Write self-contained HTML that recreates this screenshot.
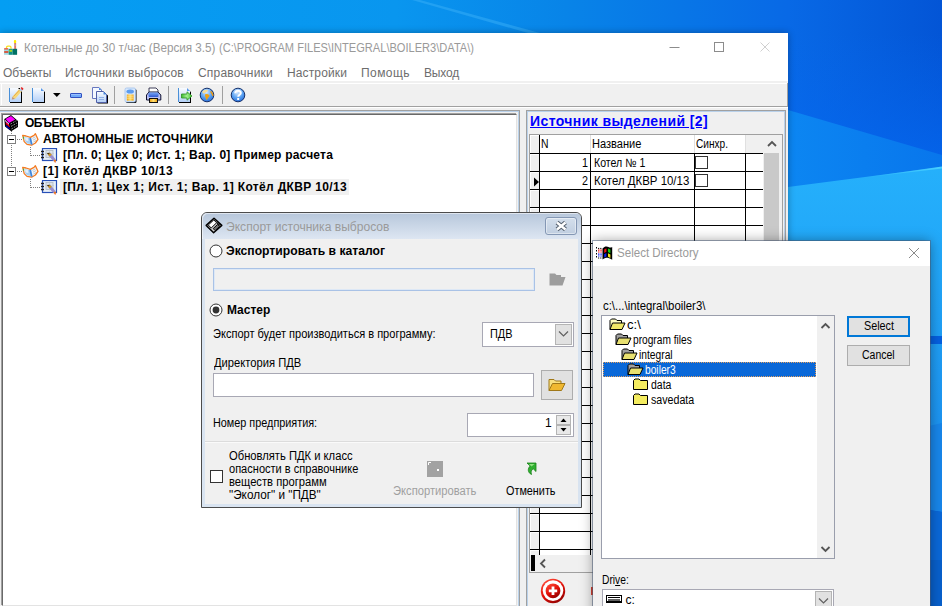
<!DOCTYPE html>
<html>
<head>
<meta charset="utf-8">
<title>Export</title>
<style>
html,body{margin:0;padding:0;}
body{width:942px;height:606px;overflow:hidden;position:relative;background:#0a7fe0;font-family:"Liberation Sans",sans-serif;font-size:11px;color:#000;}
.abs{position:absolute;}
.t{position:absolute;white-space:nowrap;line-height:1;}
/* desktop */
#desk{position:absolute;left:0;top:0;width:942px;height:606px;}
/* main window */
#main{position:absolute;left:0;top:33px;width:788px;height:573px;background:#f0f0f0;box-shadow:0 0 7px rgba(0,0,0,.32);}
#mtitle{position:absolute;left:0;top:0;width:788px;height:29px;background:#fff;}
#mmenu{position:absolute;left:0;top:29px;width:788px;height:19px;background:#fff;}
#mtool{position:absolute;left:0;top:48px;width:788px;height:26px;background:#f0f0f0;}

.mi{position:absolute;top:4px;font-size:12px;color:#6d6d6d;white-space:nowrap;line-height:14px;}
.tsep{position:absolute;top:5px;width:1px;height:18px;background:#a0a0a0;}
#lp{position:absolute;left:-1px;top:77px;width:519px;height:520px;border:1px solid #a0a0a0;box-shadow:inset 0 0 0 1px #b9d1ea;background:#f0f0f0;}
#tree{position:absolute;left:2px;top:3px;width:513px;height:490px;border-top:1px solid #696969;border-left:1px solid #696969;box-shadow:-1px -1px 0 0 #a0a0a0;background:#fff;border-right:1px solid #e3e3e3;border-bottom:1px solid #e3e3e3;}
#rp{position:absolute;left:526px;top:77px;width:258px;height:520px;border:1px solid #a0a0a0;box-shadow:inset 0 0 0 1px #b9d1ea;background:#f0f0f0;}


#grid{position:absolute;left:2px;top:23px;width:252px;height:437px;border:1px solid #a0a0a0;background:#f0f0f0;overflow:hidden;}
.gt{font-size:12px;line-height:12px;color:#000;}
.cb{width:11px;height:11px;border:1px solid #333;background:#fff;}

.tt{font-size:12px;font-weight:bold;line-height:12px;color:#000;}


#m1{letter-spacing:-0.2px;}#m2{letter-spacing:0.18px;}#m3{letter-spacing:0.2px;}#m4{letter-spacing:0.13px;}#m5{letter-spacing:0.43px;}#m6{letter-spacing:-0.18px;}
#rpt{letter-spacing:0.4px;}
#tr0{letter-spacing:-0.5px;}#tr1{letter-spacing:0.1px;}#tr2{letter-spacing:0.213px;}#tr3{letter-spacing:0.41px;}#tr4{letter-spacing:0.334px;}


#exp{position:absolute;left:201px;top:212px;width:379px;height:294px;border:1px solid #4c4c4c;border-radius:6px 6px 0 0;background:#d9e4f1;overflow:hidden;box-shadow:0 0 0 0 #000;}
#exptb{position:absolute;left:1px;top:1px;width:379px;height:26px;background:linear-gradient(#b7c7db,#dde6f2);box-shadow:inset 1px 1px 0 rgba(255,255,255,.55);border-radius:5px 5px 0 0;}
#expc{position:absolute;left:4px;top:27px;width:373px;height:265px;background:#f0f0f0;}
.db{font-size:12px;font-weight:bold;line-height:13px;}
.dt{font-size:12px;line-height:12px;}

#sd{position:absolute;left:593px;top:241px;width:337px;height:380px;background:#f0f0f0;box-shadow:0 0 12px rgba(0,0,0,.38),0 0 0 1px rgba(90,110,140,.55);}
#sdl{position:absolute;left:8px;top:74px;width:232px;height:242px;border:1px solid #9a9eac;background:#fff;}
.st{font-size:12px;line-height:12px;color:#000;}
</style>
</head>
<body>
<svg id="desk" width="942" height="606" viewBox="0 0 942 606">
  <defs>
    <linearGradient id="gtop" x1="0" y1="0" x2="1" y2="0">
      <stop offset="0" stop-color="#049ef3"/>
      <stop offset="0.42" stop-color="#0996ef"/>
      <stop offset="0.6" stop-color="#0884e8"/>
      <stop offset="0.836" stop-color="#0869e6"/>
      <stop offset="1" stop-color="#0355d6"/>
    </linearGradient>
    <linearGradient id="gA" x1="0" y1="0" x2="1" y2="0">
      <stop offset="0" stop-color="#0869e6"/>
      <stop offset="1" stop-color="#0355d6"/>
    </linearGradient>
    <linearGradient id="gA2" x1="0" y1="0" x2="0" y2="1">
      <stop offset="0" stop-color="#0566ee" stop-opacity="0"/>
      <stop offset="1" stop-color="#0568f0" stop-opacity="0.75"/>
    </linearGradient>
    <linearGradient id="gB" x1="0" y1="0" x2="1" y2="0">
      <stop offset="0" stop-color="#0c86f2"/>
      <stop offset="1" stop-color="#0876ec"/>
    </linearGradient>
    <linearGradient id="gC" x1="0" y1="0" x2="0" y2="1">
      <stop offset="0" stop-color="#25b0fb"/>
      <stop offset="0.3" stop-color="#22a8f9"/>
      <stop offset="1" stop-color="#1c92f0"/>
    </linearGradient>
    <linearGradient id="gL" x1="0" y1="0" x2="1" y2="0">
      <stop offset="0" stop-color="#48d0ff" stop-opacity="0"/>
      <stop offset="1" stop-color="#48d0ff" stop-opacity="1"/>
    </linearGradient>
  </defs>
  <rect x="0" y="0" width="942" height="606" fill="url(#gtop)"/>
  <polygon points="412,0 420,0 540,33 528,33" fill="#3ab0f8" opacity="0.5"/>
  <rect x="788" y="0" width="154" height="163" fill="url(#gA)"/>
  <rect x="788" y="33" width="154" height="130" fill="url(#gA2)"/>
  <polygon points="788,110 942,155 942,170 788,190" fill="url(#gB)"/>
  <polygon points="788,187 942,167 942,440 788,440" fill="url(#gC)"/>
  <polygon points="860,178 942,166.5 942,168.5" fill="url(#gL)"/>
  <rect x="929" y="336" width="13" height="8" fill="#0560e0"/>
  <polygon points="929,426 942,423 942,512 929,510" fill="#1886ea"/>
  <polygon points="929,510 942,512 942,606 929,606" fill="#0a68d8"/>
  <polygon points="929,560 942,560 942,606 929,606" fill="#0860cc"/>
</svg>

<div id="main">
  <div id="mtitle">
    <svg class="abs" style="left:3px;top:6px" width="16" height="17" viewBox="3 39 16 17">
<rect x="13.9" y="40" width="2.3" height="3.2" rx="1" fill="#ffee00"/>
<rect x="14.2" y="43" width="1.9" height="6" fill="#e07868"/>
<rect x="14.2" y="44.6" width="1.9" height="1" fill="#b0b8c0"/>
<path d="M6.5 48.5V47.2C6.5 46.4 7 46.2 8 46.2H9.5C10.5 46.2 11 46.6 11 47.6V48.8" stroke="#f8e020" stroke-width="1.3" fill="none"/>
<rect x="4" y="48.8" width="4.7" height="6" fill="#a8d8e2"/>
<rect x="4.2" y="48.2" width="4" height="1.3" fill="#e85030"/>
<rect x="4.2" y="51.2" width="4.2" height="1.6" fill="#e04020"/>
<rect x="8.7" y="48.8" width="3.9" height="6" fill="#109088"/>
<rect x="9.3" y="49.8" width="2.8" height="2" fill="#a8d820"/>
<rect x="12.6" y="48.8" width="4.5" height="6" fill="#007064"/>
</svg>
    <span class="t" id="ttl" style="transform:scaleX(0.9725);transform-origin:0 0;left:24px;top:8px;font-size:12px;color:#9a9a9a;line-height:14px;">Котельные до 30 т/час (Версия 3.5)</span><span class="t" id="ttl2" style="transform:scaleX(0.9230);transform-origin:0 0;left:218.5px;top:8px;font-size:12px;color:#9a9a9a;line-height:14px;">(C:\PROGRAM FILES\INTEGRAL\BOILER3\DATA\)</span>
    <svg class="abs" style="left:660px;top:0" width="128" height="29" viewBox="0 0 128 29">
      <path d="M9.5 14.5H19.5" stroke="#8c8c8c" stroke-width="1" fill="none"/>
      <rect x="54.5" y="9.5" width="9" height="9" stroke="#8c8c8c" stroke-width="1" fill="none"/>
      <path d="M100.5 9.5L109.5 18.5M109.5 9.5L100.5 18.5" stroke="#d0d0d0" stroke-width="1" fill="none"/>
    </svg>
  </div>
  <div id="mmenu">
    <span class="mi" id="m1" style="left:3px">Объекты</span>
    <span class="mi" id="m2" style="left:65px">Источники выбросов</span>
    <span class="mi" id="m3" style="left:198px">Справочники</span>
    <span class="mi" id="m4" style="left:287px">Настройки</span>
    <span class="mi" id="m5" style="left:361px">Помощь</span>
    <span class="mi" id="m6" style="left:424px">Выход</span>
  </div>
  <div id="mtool">
    <div class="abs" style="left:0;top:2px;width:787px;height:1px;background:#fff"></div>
    <div class="abs" style="left:1px;top:3px;width:1px;height:21px;background:#fff"></div>
    <div class="abs" style="left:787px;top:2px;width:1px;height:23px;background:#a0a0a0"></div>
    <div class="tsep" style="left:114px"></div>
    <div class="tsep" style="left:168px"></div>
    <div class="tsep" style="left:222px"></div>
    
<svg class="abs" style="left:0;top:2px" width="260" height="24" viewBox="0 83 260 24">
<defs>
<linearGradient id="pg" x1="0" y1="0" x2="0" y2="1"><stop offset="0" stop-color="#fafcff"/><stop offset="1" stop-color="#b4d0f8"/></linearGradient>
<linearGradient id="pb" x1="0" y1="0" x2="0" y2="1"><stop offset="0" stop-color="#78a8f8"/><stop offset="1" stop-color="#3058d0"/></linearGradient>
<radialGradient id="gl" cx="0.4" cy="0.35" r="0.7"><stop offset="0" stop-color="#a8d0ff"/><stop offset="0.6" stop-color="#3a80f0"/><stop offset="1" stop-color="#1048c0"/></radialGradient>
<radialGradient id="gl2" cx="0.45" cy="0.3" r="0.75"><stop offset="0" stop-color="#d8eaff"/><stop offset="0.55" stop-color="#5aa2f2"/><stop offset="1" stop-color="#2466d6"/></radialGradient>
<linearGradient id="yl" x1="0" y1="0" x2="1" y2="0"><stop offset="0" stop-color="#f0a010"/><stop offset="0.5" stop-color="#ffe070"/><stop offset="1" stop-color="#f0a010"/></linearGradient>
<linearGradient id="gr" x1="0" y1="0" x2="1" y2="0"><stop offset="0" stop-color="#40b830"/><stop offset="0.5" stop-color="#a0f090"/><stop offset="1" stop-color="#48c838"/></linearGradient>
</defs>
<!-- 1 edit -->
<rect x="10" y="89" width="12" height="14" fill="#000"/>
<rect x="9" y="88" width="12" height="14" fill="url(#pg)"/>
<rect x="9" y="88" width="1" height="14" fill="#4a90d8"/>
<path d="M12.4 96.8L19.6 88.6L22.2 90.8L15 99Z" fill="#f8d878"/>
<path d="M12.4 96.8L15 99L11.8 99.6Z" fill="#c89870"/>
<path d="M13.5 96.5L20.5 89" stroke="#e0a040" stroke-width="0.8"/>
<path d="M19 89.8L20.6 88.2L22.6 90L21 91.8Z" fill="#b8c8e8"/>
<path d="M20.6 88L21.8 87L23.5 88.8L22.6 90.2Z" fill="#e82020"/>
<path d="M18.5 88.5H20" stroke="#000" stroke-width="1"/>
<!-- 2 new -->
<path d="M33 89H41L45 92V103H33Z" fill="#000"/>
<path d="M32 88H41L44 91V102H32Z" fill="url(#pg)"/>
<rect x="32" y="88" width="1" height="14" fill="#4a90d8"/>
<path d="M41 88V91H44Z" fill="#5898e8"/>
<!-- arrow -->
<path d="M53 93H60.6L56.8 97Z" fill="#000"/>
<!-- minus -->
<rect x="70.5" y="93.5" width="11" height="4" rx="0.5" fill="#70a8f8" stroke="#3050c0" stroke-width="1"/>
<rect x="71" y="94" width="10" height="1" fill="#98c0ff"/>
<!-- copy -->
<path d="M92.5 87.5H99L101.5 90V98.5H92.5Z" fill="#f4f8ff" stroke="#6878c0" stroke-width="1"/>
<path d="M99 87.5V90H101.5Z" fill="#4888e0"/>
<path d="M97.5 92.5H104L108 95.5V103.5H97.5Z" fill="#000"/>
<path d="M96.5 91.5H103.5L106.5 94.5V102.5H96.5Z" fill="url(#pg)" stroke="#5060a8" stroke-width="1"/>
<path d="M103.5 91.5V94.5H106.5Z" fill="#4888e0"/>
<path d="M99 97.5H104M99 99.5H104" stroke="#90b0e8" stroke-width="1"/>
<!-- db -->
<rect x="126" y="89" width="10.5" height="14" rx="1.5" fill="#000"/>
<rect x="125" y="88" width="10.5" height="14" rx="1.5" fill="#d8e8fc" stroke="#a0c0ec" stroke-width="0.8"/>
<ellipse cx="130.2" cy="91.5" rx="3.8" ry="2" fill="#5c9cf0"/>
<rect x="126.8" y="94.5" width="6.8" height="6.2" fill="url(#yl)"/>
<path d="M126.8 96.2H133.6M126.8 98.2H133.6" stroke="#fff0b0" stroke-width="0.6"/>
<!-- printer -->
<path d="M149 92V88H156L158 90V92" fill="#fff" stroke="#101030" stroke-width="0.8"/>
<path d="M146.5 95L149 92H158L160.8 95V100H146.5Z" fill="#b8c0f4" stroke="#101030" stroke-width="1"/>
<rect x="148.5" y="92.5" width="10" height="4.5" rx="1" fill="url(#pb)"/>
<rect x="149.5" y="98.5" width="8" height="4" fill="url(#yl)" stroke="#101010" stroke-width="1"/>
<!-- export -->
<path d="M179 89H187L191 92V103H179Z" fill="#000"/>
<path d="M178 88H187L190 91V102H178Z" fill="url(#pg)"/>
<rect x="178" y="88" width="1" height="14" fill="#4a90d8"/>
<path d="M187 88V91H190Z" fill="#5898e8"/>
<path d="M181.5 94H187V91.8L192 96L187 100.2V98H181.5Z" fill="url(#gr)" stroke="#2a9020" stroke-width="0.8"/>
<!-- globe -->
<circle cx="207" cy="95" r="6.8" fill="url(#gl2)" stroke="#15306a" stroke-width="1"/>
<path d="M202.2 92C203 90.5 205 89.6 207.5 89.8C208.5 90.6 207.5 91.6 206.5 92C205.5 92.6 204.5 93.6 203 93.4Z" fill="#f6dc98"/>
<path d="M205.2 94.2C206.5 93.6 208.5 94.2 209.6 95.4C209 97 207.6 98 206.8 100.2C205.6 99 205.8 97 205 96Z" fill="#f0a010"/>
<path d="M210.6 90.8C212.4 91.6 213.6 93.5 213.5 96C212.4 96.6 211.8 95.2 211.6 94C210.6 93.4 210 92 210.6 90.8Z" fill="#e89a18"/>
<!-- help -->
<circle cx="238" cy="95" r="6.8" fill="url(#gl2)" stroke="#15306a" stroke-width="1"/>
<path d="M235.3 93.2C235.3 90 240.8 90 240.8 93C240.8 94.8 238.2 94.8 238.2 96.8" stroke="#fff" stroke-width="2" fill="none"/>
<rect x="237.2" y="98" width="2" height="2" fill="#fff"/>
</svg>

  </div>
  <div class="abs" style="left:0;top:73px;width:788px;height:1px;background:#a0a0a0"></div>
  <div class="abs" style="left:0;top:74px;width:788px;height:1px;background:#fff"></div>
  <!-- left panel -->
  <div id="lp">
    <div id="tree">
      <div class="abs" style="left:57px;top:64px;width:289px;height:16px;background:#f0f0f0"></div>
<svg class="abs" style="left:0;top:0" width="80" height="90" viewBox="3 115 80 90" shape-rendering="crispEdges">
<g stroke="#808080" stroke-width="1" stroke-dasharray="1 1" fill="none">
<path d="M11.5 131V135"/>
<path d="M11.5 145V167"/>
<path d="M17 139.5H22"/>
<path d="M17 171.5H22"/>
<path d="M30.5 147V156"/>
<path d="M30.5 155.5H41"/>
<path d="M30.5 179V188"/>
<path d="M30.5 187.5H41"/>
</g>
<g stroke="#808080" fill="#fff">
<rect x="7.5" y="135.5" width="8" height="8"/>
<rect x="7.5" y="167.5" width="8" height="8"/>
</g>
<g stroke="#000">
<path d="M9 139.5H14"/>
<path d="M9 171.5H14"/>
</g>
</svg>
<svg class="abs" style="left:0px;top:-1px" width="17" height="18" viewBox="3 114 17 18">
<path d="M4.3 119L11 115L18 121V127L11.2 131.3L5 126.5Z" fill="#000"/>
<path d="M5.6 119.1L11 115.9L15.2 119.5L9 123Z" fill="#ff00ff"/>
<path d="M5 120.4L9 124.2" stroke="#fff" stroke-width="1"/>
<path d="M5.4 121.6L8.8 124.9" stroke="#ff40ff" stroke-width="0.8"/>
<path d="M6 123.2L9.6 126.6" stroke="#ff0000" stroke-width="1.3"/>
<path d="M6 125.6L9.8 129" stroke="#0000a8" stroke-width="1.5"/>
<path d="M10.5 124L16.5 120.6M11 126.4L17 123M11.4 129L17.2 125.6" stroke="#8c8c8c" stroke-width="1" stroke-dasharray="1.8 1"/>
</svg>
<svg class="abs" style="left:19px;top:18px" width="17" height="14" viewBox="0 0 17 14">
<path d="M0.7 2.4L4 3L8.3 4.3L12 2.4L13.4 0.7L16 6.4L13.4 10L9.6 12.2L5 11.4L2.2 8.6Z" fill="#f4f8fd" stroke="#f47a20" stroke-width="1.3" stroke-linejoin="round"/>
<path d="M2.6 4L8 5.3L9.2 11L5.2 10.4L3 8Z" fill="#a8cff2"/>
<path d="M3 4.4L6 5.2L6.4 8L3.6 7.4Z" fill="#e4f0fc"/>
<path d="M8.2 5L9.8 11.6" stroke="#3f86dc" stroke-width="1.8"/>
<path d="M10.4 5.4L13.4 3.8M10.9 7.2L13.9 5.6M11.4 9L14 7.6" stroke="#a8b0b8" stroke-width="0.7"/>
<path d="M1.6 3.6V5.8" stroke="#40b040" stroke-width="1"/>
</svg>
<svg class="abs" style="left:19px;top:50px" width="17" height="14" viewBox="0 0 17 14">
<path d="M0.7 2.4L4 3L8.3 4.3L12 2.4L13.4 0.7L16 6.4L13.4 10L9.6 12.2L5 11.4L2.2 8.6Z" fill="#f4f8fd" stroke="#f47a20" stroke-width="1.3" stroke-linejoin="round"/>
<path d="M2.6 4L8 5.3L9.2 11L5.2 10.4L3 8Z" fill="#a8cff2"/>
<path d="M3 4.4L6 5.2L6.4 8L3.6 7.4Z" fill="#e4f0fc"/>
<path d="M8.2 5L9.8 11.6" stroke="#3f86dc" stroke-width="1.8"/>
<path d="M10.4 5.4L13.4 3.8M10.9 7.2L13.9 5.6M11.4 9L14 7.6" stroke="#a8b0b8" stroke-width="0.7"/>
<path d="M1.6 3.6V5.8" stroke="#40b040" stroke-width="1"/>
</svg>
<svg class="abs" style="left:38px;top:33px" width="17" height="16" viewBox="0 0 17 16">
<rect x="1.5" y="0.5" width="14" height="12" fill="#e8f0fa" stroke="#2850b8" stroke-width="1.2"/>
<rect x="5" y="2.5" width="7" height="7" fill="#dde3ea" stroke="#b0b8c4" stroke-width="0.8"/>
<path d="M8.5 1.5V10.5M4 5.5H13" stroke="#c0c8d0" stroke-width="0.6"/>
<path d="M0 3.5H3M0 6.5H3M0 9.5H3" stroke="#202020" stroke-width="1.4"/>
<path d="M6.6 6.4L9.2 4.8L14.6 11.2L12.4 13.2Z" fill="#9a8ed0"/>
<path d="M5.8 5L9.2 4.8L7.4 7Z" fill="#503808"/>
<path d="M7 6.6L9.4 5.2L10.8 6.8L8.6 8.4Z" fill="#d09820"/>
<path d="M12.6 12.6L14.2 11.3L15.2 13L13.8 14.4Z" fill="#f07818"/>
<path d="M13.8 14.2L14.6 13.4L14.3 15Z" fill="#e02020"/>
</svg>
<svg class="abs" style="left:38px;top:65px" width="17" height="16" viewBox="0 0 17 16">
<rect x="1.5" y="0.5" width="14" height="12" fill="#e8f0fa" stroke="#2850b8" stroke-width="1.2"/>
<rect x="5" y="2.5" width="7" height="7" fill="#dde3ea" stroke="#b0b8c4" stroke-width="0.8"/>
<path d="M8.5 1.5V10.5M4 5.5H13" stroke="#c0c8d0" stroke-width="0.6"/>
<path d="M0 3.5H3M0 6.5H3M0 9.5H3" stroke="#202020" stroke-width="1.4"/>
<path d="M6.6 6.4L9.2 4.8L14.6 11.2L12.4 13.2Z" fill="#9a8ed0"/>
<path d="M5.8 5L9.2 4.8L7.4 7Z" fill="#503808"/>
<path d="M7 6.6L9.4 5.2L10.8 6.8L8.6 8.4Z" fill="#d09820"/>
<path d="M12.6 12.6L14.2 11.3L15.2 13L13.8 14.4Z" fill="#f07818"/>
<path d="M13.8 14.2L14.6 13.4L14.3 15Z" fill="#e02020"/>
</svg>
<span class="t tt" id="tr0" style="left:22px;top:2px">ОБЪЕКТЫ</span>
<span class="t tt" id="tr1" style="left:40px;top:18px">АВТОНОМНЫЕ ИСТОЧНИКИ</span>
<span class="t tt" id="tr2" style="left:60px;top:34px">[Пл. 0; Цех 0; Ист. 1; Вар. 0] Пример расчета</span>
<span class="t tt" id="tr3" style="left:40px;top:50px">[1] Котёл ДКВР 10/13</span>
<span class="t tt" id="tr4" style="left:60px;top:66px">[Пл. 1; Цех 1; Ист. 1; Вар. 1] Котёл ДКВР 10/13</span>
    </div>
  </div>
  <div class="abs" style="left:0;top:79px;width:1px;height:500px;background:#f0f0f0"></div>
  <!-- right panel -->
  <div id="rp">
    <span class="t" id="rpt" style="left:3px;top:2px;font-size:14px;font-weight:bold;color:#0000ff;text-decoration:underline;line-height:16px;">Источник выделений [2]</span>
    <div id="grid">
<div class="abs" style="left:0;top:0;width:233px;height:420px;background:#fff"></div>
<div class="abs" style="left:0;top:0;width:9px;height:420px;background:#f0f0f0"></div>
<div class="abs" style="left:216px;top:0;width:17px;height:18px;background:#f0f0f0"></div>
<div class="abs" style="left:60px;top:0;width:1px;height:18px;background:#e0e0e0"></div>
<div class="abs" style="left:164px;top:0;width:1px;height:18px;background:#e0e0e0"></div>
<div class="abs" style="left:215px;top:0;width:1px;height:18px;background:#e0e0e0"></div>
<div class="abs" style="left:0;top:0;width:9px;height:1px;background:#fff"></div>
<div class="abs" style="left:0;top:0;width:1px;height:420px;background:#fff"></div>
<div class="abs" style="left:0;top:18px;width:233px;height:1px;background:#000"></div>
<div class="abs" style="left:1px;top:19px;width:8px;height:1px;background:#fff"></div>
<div class="abs" style="left:0;top:36px;width:233px;height:1px;background:#000"></div>
<div class="abs" style="left:1px;top:37px;width:8px;height:1px;background:#fff"></div>
<div class="abs" style="left:0;top:54px;width:233px;height:1px;background:#000"></div>
<div class="abs" style="left:1px;top:55px;width:8px;height:1px;background:#fff"></div>
<div class="abs" style="left:0;top:72px;width:233px;height:1px;background:#000"></div>
<div class="abs" style="left:1px;top:73px;width:8px;height:1px;background:#fff"></div>
<div class="abs" style="left:0;top:90px;width:233px;height:1px;background:#000"></div>
<div class="abs" style="left:1px;top:91px;width:8px;height:1px;background:#fff"></div>
<div class="abs" style="left:0;top:108px;width:233px;height:1px;background:#000"></div>
<div class="abs" style="left:1px;top:109px;width:8px;height:1px;background:#fff"></div>
<div class="abs" style="left:0;top:126px;width:233px;height:1px;background:#000"></div>
<div class="abs" style="left:1px;top:127px;width:8px;height:1px;background:#fff"></div>
<div class="abs" style="left:0;top:144px;width:233px;height:1px;background:#000"></div>
<div class="abs" style="left:1px;top:145px;width:8px;height:1px;background:#fff"></div>
<div class="abs" style="left:0;top:162px;width:233px;height:1px;background:#000"></div>
<div class="abs" style="left:1px;top:163px;width:8px;height:1px;background:#fff"></div>
<div class="abs" style="left:0;top:180px;width:233px;height:1px;background:#000"></div>
<div class="abs" style="left:1px;top:181px;width:8px;height:1px;background:#fff"></div>
<div class="abs" style="left:0;top:198px;width:233px;height:1px;background:#000"></div>
<div class="abs" style="left:1px;top:199px;width:8px;height:1px;background:#fff"></div>
<div class="abs" style="left:0;top:216px;width:233px;height:1px;background:#000"></div>
<div class="abs" style="left:1px;top:217px;width:8px;height:1px;background:#fff"></div>
<div class="abs" style="left:0;top:234px;width:233px;height:1px;background:#000"></div>
<div class="abs" style="left:1px;top:235px;width:8px;height:1px;background:#fff"></div>
<div class="abs" style="left:0;top:252px;width:233px;height:1px;background:#000"></div>
<div class="abs" style="left:1px;top:253px;width:8px;height:1px;background:#fff"></div>
<div class="abs" style="left:0;top:270px;width:233px;height:1px;background:#000"></div>
<div class="abs" style="left:1px;top:271px;width:8px;height:1px;background:#fff"></div>
<div class="abs" style="left:0;top:288px;width:233px;height:1px;background:#000"></div>
<div class="abs" style="left:1px;top:289px;width:8px;height:1px;background:#fff"></div>
<div class="abs" style="left:0;top:306px;width:233px;height:1px;background:#000"></div>
<div class="abs" style="left:1px;top:307px;width:8px;height:1px;background:#fff"></div>
<div class="abs" style="left:0;top:324px;width:233px;height:1px;background:#000"></div>
<div class="abs" style="left:1px;top:325px;width:8px;height:1px;background:#fff"></div>
<div class="abs" style="left:0;top:342px;width:233px;height:1px;background:#000"></div>
<div class="abs" style="left:1px;top:343px;width:8px;height:1px;background:#fff"></div>
<div class="abs" style="left:0;top:360px;width:233px;height:1px;background:#000"></div>
<div class="abs" style="left:1px;top:361px;width:8px;height:1px;background:#fff"></div>
<div class="abs" style="left:0;top:378px;width:233px;height:1px;background:#000"></div>
<div class="abs" style="left:1px;top:379px;width:8px;height:1px;background:#fff"></div>
<div class="abs" style="left:0;top:396px;width:233px;height:1px;background:#000"></div>
<div class="abs" style="left:1px;top:397px;width:8px;height:1px;background:#fff"></div>
<div class="abs" style="left:0;top:414px;width:233px;height:1px;background:#000"></div>
<div class="abs" style="left:1px;top:415px;width:8px;height:1px;background:#fff"></div>
<div class="abs" style="left:9px;top:0;width:1px;height:420px;background:#000"></div>
<div class="abs" style="left:60px;top:18px;width:1px;height:402px;background:#000"></div>
<div class="abs" style="left:164px;top:18px;width:1px;height:402px;background:#000"></div>
<div class="abs" style="left:215px;top:18px;width:1px;height:402px;background:#000"></div>
<span class="t gt" id="gh1" style="transform:scaleX(0.8649);transform-origin:0 0;left:11px;top:3px">N</span>
<span class="t gt" id="gh2" style="transform:scaleX(0.9212);transform-origin:0 0;left:61.700000000000045px;top:3px">Название</span>
<span class="t gt" id="gh3" style="transform:scaleX(0.8418);transform-origin:0 0;left:165.60000000000002px;top:3px">Синхр.</span>
<span class="t gt" id="gr1n" style="transform:scaleX(0.8972);transform-origin:0 0;left:52px;top:22px">1</span>
<span class="t gt" id="gr1t" style="transform:scaleX(0.8805);transform-origin:0 0;left:63.700000000000045px;top:22px">Котел № 1</span>
<span class="t gt" id="gr2n" style="transform:scaleX(0.8972);transform-origin:0 0;left:52px;top:40px">2</span>
<span class="t gt" id="gr2t" style="transform:scaleX(0.9542);transform-origin:0 0;left:63.700000000000045px;top:40px">Котел ДКВР 10/13</span>
<div class="abs cb" style="left:165px;top:21px"></div>
<div class="abs cb" style="left:165px;top:39px"></div>
<svg class="abs" style="left:4px;top:42px" width="6" height="10" viewBox="0 0 6 10"><path d="M0 0.5L5 5L0 9.5Z" fill="#000"/></svg>
<div class="abs" style="left:233px;top:0;width:19px;height:420px;background:#f0f0f0"></div>
<div class="abs" style="left:234px;top:18px;width:15px;height:402px;background:#c9c9c9"></div>
<svg class="abs" style="left:234px;top:0" width="16" height="18" viewBox="0 0 16 18"><path d="M4 11L8 7L12 11" stroke="#555" stroke-width="1.8" fill="none"/></svg>
<div class="abs" style="left:0;top:420px;width:252px;height:17px;background:#f0f0f0"></div>
<div class="abs" style="left:1px;top:420px;width:4px;height:16px;background:#000"></div>
<svg class="abs" style="left:8px;top:420px" width="10" height="17" viewBox="0 0 10 17"><path d="M7 4.5L3 8.5L7 12.5" stroke="#555" stroke-width="1.8" fill="none"/></svg>
</div>
<svg class="abs" style="left:13px;top:467px" width="26" height="26" viewBox="0 0 26 26">
<defs><linearGradient id="rb" x1="0.2" y1="0" x2="0.8" y2="1"><stop offset="0" stop-color="#ff4a38"/><stop offset="0.5" stop-color="#e01008"/><stop offset="1" stop-color="#8c0000"/></linearGradient></defs>
<circle cx="13" cy="13" r="12.2" fill="url(#rb)"/>
<circle cx="13" cy="12.6" r="10.3" fill="#fff"/>
<circle cx="13" cy="12.8" r="7.4" fill="url(#rb)"/>
<path d="M13 8.6V17M8.8 12.8H17.2" stroke="#fff" stroke-width="2.8" fill="none"/>
</svg>
<div class="abs" style="left:64px;top:476px;width:2px;height:8px;background:#d84030"></div>
  </div>
</div>
<div id="exp"><div class="abs" style="left:-1px;top:-1px;width:0;height:0">
<div id="exptb"></div>
<svg class="abs" style="left:4px;top:5px" width="19" height="17" viewBox="205 217 19 17">
<path d="M206.2 225.4L214 218.2L221.8 225.4L213.6 232.8Z" fill="#d4d4d4" stroke="#000" stroke-width="1.5" stroke-linejoin="round"/>
<path d="M208.3 225L213.8 219.9L216.6 222.8L211.2 228Z" fill="#fff" stroke="#000" stroke-width="1"/>
<path d="M213.2 228.6L217.6 224.4L219.6 226.4L215.2 230.6Z" fill="#707070" stroke="#000" stroke-width="1"/>
<path d="M216.8 222.6L219.8 225.4" stroke="#000" stroke-width="1.2"/>
</svg>
<span class="t" id="expt" style="transform:scaleX(1.0067);transform-origin:0 0;left:25px;top:8px;font-size:12px;line-height:14px;color:#9a9a9a">Экспорт источника выбросов</span>
<div class="abs" style="left:344px;top:5px;width:30px;height:16px;border:1px solid #8497b4;border-radius:3px;background:linear-gradient(#d4dfec,#c0cee0);box-shadow:inset 0 0 0 1px rgba(255,255,255,.45)"></div>
<svg class="abs" style="left:352px;top:7px" width="18" height="14" viewBox="553 219 18 14"><path d="M557 222.5L565.5 229.5M565.5 222.5L557 229.5" stroke="#55606e" stroke-width="4.4" fill="none"/><path d="M557 222.5L565.5 229.5M565.5 222.5L557 229.5" stroke="#fff" stroke-width="2.4" fill="none"/></svg>
<div id="expc">
</div>
<svg class="abs" style="left:7.5px;top:32px" width="14" height="14" viewBox="0 0 14 14"><circle cx="7" cy="7" r="6" fill="#fff" stroke="#333" stroke-width="1"/></svg>
<svg class="abs" style="left:7.5px;top:91px" width="14" height="14" viewBox="0 0 14 14"><circle cx="7" cy="7" r="6" fill="#fff" stroke="#333" stroke-width="1"/><circle cx="7" cy="7" r="3.4" fill="#333"/></svg>
<span class="t db" id="e1" style="transform:scaleX(1.0131);transform-origin:0 0;left:25px;top:33px">Экспортировать в каталог</span>
<span class="t db" id="e2" style="transform:scaleX(0.9960);transform-origin:0 0;left:26px;top:92px">Мастер</span>
<div class="abs" style="left:12px;top:56px;width:320px;height:21px;border:1px solid #a9c2e6;box-shadow:inset 0 0 0 1px #dde8f6;background:#f0f0f0"></div>
<svg class="abs" style="left:348px;top:61px" width="17" height="13" viewBox="0 0 17 13"><path d="M0.5 0.5H6L7.5 2H12V4H16.5L13.5 12.5H0.5Z" fill="#9d9d9d"/></svg>
<span class="t dt" id="e3" style="transform:scaleX(0.9199);transform-origin:0 0;left:12px;top:116px">Экспорт будет производиться в программу:</span>
<div class="abs" style="left:281px;top:110px;width:90px;height:23px;border:1px solid #a8a8b4;background:#fff"></div>
<span class="t dt" id="e4" style="transform:scaleX(0.9085);transform-origin:0 0;left:289px;top:116px;font-size:12px">ПДВ</span>
<div class="abs" style="left:354px;top:112px;width:15px;height:19px;border:1px solid #b4b4b4;background:#e1e1e1"></div>
<svg class="abs" style="left:357px;top:118px" width="11" height="8" viewBox="0 0 11 8"><path d="M1 1.5L5.5 6L10 1.5" stroke="#606060" stroke-width="1.2" fill="none"/></svg>
<span class="t dt" id="e5" style="transform:scaleX(0.9331);transform-origin:0 0;left:13px;top:145px">Директория ПДВ</span>
<div class="abs" style="left:12px;top:161px;width:319px;height:22px;border:1px solid #a8a8b4;background:#fff"></div>
<div class="abs" style="left:340px;top:158px;width:30px;height:28px;border:1px solid #adadad;background:#e1e1e1"></div>
<svg class="abs" style="left:347px;top:166px" width="18" height="14" viewBox="0 0 18 14">
<path d="M1 12.5V1.5H6L7.5 3H13V5.5" fill="#f8e080" stroke="#a07818" stroke-width="1"/>
<path d="M1 12.5L4.5 5.5H17L13.5 12.5Z" fill="#f0b830" stroke="#a07818" stroke-width="1"/>
</svg>
<span class="t dt" id="e6" style="transform:scaleX(0.9031);transform-origin:0 0;left:12px;top:205px">Номер предприятия:</span>
<div class="abs" style="left:266px;top:201px;width:105px;height:22px;border:1px solid #a8a8b4;background:#fff"></div>
<span class="t dt" id="e7" style="left:344px;top:205px;font-size:12px">1</span>
<svg class="abs" style="left:355px;top:203px" width="15" height="20" viewBox="0 0 15 20">
<rect x="0.5" y="0.5" width="14" height="9" fill="#e8e8e8" stroke="#b4b4b4"/>
<rect x="0.5" y="10.5" width="14" height="9" fill="#e8e8e8" stroke="#b4b4b4"/>
<path d="M4.5 7L7.5 3.5L10.5 7Z" fill="#000"/>
<path d="M4.5 13L7.5 16.5L10.5 13Z" fill="#000"/>
</svg>
<div class="abs" style="left:4px;top:229px;width:373px;height:1px;background:#dcdcdc"></div>
<div class="abs" style="left:4px;top:230px;width:373px;height:1px;background:#fafafa"></div>
<div class="abs" style="left:9px;top:258px;width:11px;height:11px;border:1px solid #333;background:#fff"></div>
<span class="t dt" id="c0" style="transform:scaleX(0.9337);transform-origin:0 0;left:28px;top:238px">Обновлять ПДК и класс</span>
<span class="t dt" id="c1" style="transform:scaleX(0.9201);transform-origin:0 0;left:28px;top:251px">опасности в справочнике</span>
<span class="t dt" id="c2" style="transform:scaleX(0.9330);transform-origin:0 0;left:28px;top:264px">веществ программ</span>
<span class="t dt" id="c3" style="transform:scaleX(0.9789);transform-origin:0 0;left:28px;top:277px">"Эколог" и "ПДВ"</span>
<svg class="abs" style="left:226px;top:249px" width="16" height="16" viewBox="0 0 16 16"><rect width="16" height="16" fill="#a2a2a2"/><path d="M1.5 4V1.5H4" stroke="#fff" stroke-width="1" fill="none"/><rect x="10" y="8" width="2" height="2" fill="#fff"/></svg>
<span class="t dt" id="b1" style="transform:scaleX(0.9314);transform-origin:0 0;left:192px;top:273px;color:#a0a0a0;font-size:12px">Экспортировать</span>
<svg class="abs" style="left:324px;top:250px" width="12" height="13" viewBox="0 0 12 13"><path d="M2 1H11V9.5L8.2 6.8C6 8 5.8 10 6.5 12.5C2.5 10.5 2.5 6.5 5.2 4Z" fill="#30b030" stroke="#188018" stroke-width="0.8"/><path d="M4 2H9.5L6.5 4.5Z" fill="#90e080"/></svg>
<span class="t dt" id="b2" style="transform:scaleX(0.9026);transform-origin:0 0;left:305px;top:273px;font-size:12px">Отменить</span>
</div></div>
<div id="sd">
<div class="abs" style="left:0;top:0;width:337px;height:25px;background:#fff"></div>
<svg class="abs" style="left:3px;top:5px" width="17" height="15" viewBox="596 246 17 15">
<path d="M602.5 248.5C604.5 246 607 246 608.5 247C610 248 611 247.6 612.2 247V259.8C611 259 610 258.4 608.5 258C606.5 257.4 604.5 258 602.5 259.6Z" fill="#000"/>
<path d="M604.2 249.5L606.4 248.2V251.8L604.2 253Z" fill="#f01010"/>
<path d="M608 248.4L610.4 249.6V253.2L608 252Z" fill="#10d010"/>
<path d="M604.2 254.2L606.4 253V256.4L604.2 257.6Z" fill="#1020f0"/>
<path d="M608 253.2L610.4 254.4V258L608 256.8Z" fill="#f0e010"/>
<path d="M596.5 247V259" stroke="#000" stroke-width="1" stroke-dasharray="1.5 1.5"/>
<path d="M598 250.2H602M598 252H602" stroke="#f01010" stroke-width="1.2" stroke-dasharray="1.5 0.8"/>
<path d="M598 254.2H602M598 256H602" stroke="#1020f0" stroke-width="1.2" stroke-dasharray="1.5 0.8"/>
<path d="M598 248.4H602M598 258H602" stroke="#000" stroke-width="1" stroke-dasharray="1.2 1"/>
</svg>
<span class="t" id="sdt" style="transform:scaleX(0.9634);transform-origin:0 0;left:24.299999999999955px;top:5px;font-size:12px;line-height:14px;color:#9a9a9a">Select Directory</span>
<svg class="abs" style="left:315px;top:6px" width="12" height="12" viewBox="0 0 12 12"><path d="M1 1L11 11M11 1L1 11" stroke="#8a8a8a" stroke-width="1" fill="none"/></svg>
<span class="t st" id="sdp" style="transform:scaleX(0.9476);transform-origin:0 0;left:9.799999999999955px;top:59px">c:\...\integral\boiler3\</span>
<div id="sdl">
</div>
<div class="abs" style="left:10px;top:121px;width:213px;height:15px;background:#0a68d8;outline:1px dotted #e0a060;outline-offset:-1px"></div>
<svg class="abs" style="left:16px;top:77px" width="17" height="13" viewBox="0 0 17 13">
<path d="M1 11.5V2.5L2.5 1H6.5L8 2.5H12.5V5" fill="#ffffc0" stroke="#000" stroke-width="1"/>
<path d="M1 11.5L3.5 5H16L13 11.5Z" fill="#f0e868" stroke="#000" stroke-width="1"/>
</svg>
<svg class="abs" style="left:22px;top:92px" width="17" height="13" viewBox="0 0 17 13">
<path d="M1 11.5V2.5L2.5 1H6.5L8 2.5H12.5V5" fill="#a0a0a0" stroke="#000" stroke-width="1"/>
<path d="M1 11.5L3.5 5H16L13 11.5Z" fill="#e8e070" stroke="#000" stroke-width="1"/>
</svg>
<svg class="abs" style="left:28px;top:107px" width="17" height="13" viewBox="0 0 17 13">
<path d="M1 11.5V2.5L2.5 1H6.5L8 2.5H12.5V5" fill="#a0a0a0" stroke="#000" stroke-width="1"/>
<path d="M1 11.5L3.5 5H16L13 11.5Z" fill="#e8e070" stroke="#000" stroke-width="1"/>
</svg>
<svg class="abs" style="left:34px;top:122px" width="17" height="13" viewBox="0 0 17 13">
<path d="M1 11.5V2.5L2.5 1H6.5L8 2.5H12.5V5" fill="#a0a0a0" stroke="#000" stroke-width="1"/>
<path d="M1 11.5L3.5 5H16L13 11.5Z" fill="#e8e070" stroke="#000" stroke-width="1"/>
</svg>
<svg class="abs" style="left:40px;top:137px" width="16" height="13" viewBox="0 0 16 13">
<path d="M0.5 11.5V2.5L2 1H6L7.5 2.5H14.5V11.5Z" fill="#f4ec60" stroke="#000" stroke-width="1"/>
</svg>
<svg class="abs" style="left:40px;top:152px" width="16" height="13" viewBox="0 0 16 13">
<path d="M0.5 11.5V2.5L2 1H6L7.5 2.5H14.5V11.5Z" fill="#f4ec60" stroke="#000" stroke-width="1"/>
</svg>
<span class="t st" id="l0" style="transform:scaleX(1.0890);transform-origin:0 0;left:33.700000000000045px;top:78px;color:#000">c:\</span>
<span class="t st" id="l1" style="transform:scaleX(0.8478);transform-origin:0 0;left:39.60000000000002px;top:93px;color:#000">program files</span>
<span class="t st" id="l2" style="transform:scaleX(0.8537);transform-origin:0 0;left:45.60000000000002px;top:108px;color:#000">integral</span>
<span class="t st" id="l3" style="transform:scaleX(0.8520);transform-origin:0 0;left:51.5px;top:123px;color:#fff">boiler3</span>
<span class="t st" id="l4" style="transform:scaleX(0.8733);transform-origin:0 0;left:57.799999999999955px;top:138px;color:#000">data</span>
<span class="t st" id="l5" style="transform:scaleX(0.8870);transform-origin:0 0;left:57.799999999999955px;top:153px;color:#000">savedata</span>
<div class="abs" style="left:224px;top:75px;width:17px;height:242px;background:#f0f0f0"></div>
<svg class="abs" style="left:224px;top:75px" width="17" height="17" viewBox="0 0 17 17"><path d="M4.5 12L8.5 8L12.5 12" stroke="#555" stroke-width="1.8" fill="none"/></svg>
<svg class="abs" style="left:224px;top:300px" width="17" height="17" viewBox="0 0 17 17"><path d="M4.5 6L8.5 10L12.5 6" stroke="#555" stroke-width="1.8" fill="none"/></svg>
<div class="abs" style="left:254px;top:75px;width:59px;height:17px;border:2px solid #0078d7;background:#e1e1e1"></div>
<span class="t st" id="bs" style="transform:scaleX(0.8993);transform-origin:0 0;left:270.5px;top:79px">Select</span>
<div class="abs" style="left:254px;top:104px;width:61px;height:19px;border:1px solid #adadad;background:#e1e1e1"></div>
<span class="t st" id="bc" style="transform:scaleX(0.8753);transform-origin:0 0;left:268.79999999999995px;top:108px">Cancel</span>
<span class="t st" id="dl" style="transform:scaleX(0.8550);transform-origin:0 0;left:9.399999999999977px;top:333px">Dri<u>v</u>e:</span>
<div class="abs" style="left:9px;top:348px;width:230px;height:24px;border:1px solid #a8a8b4;background:#fff"></div>
<svg class="abs" style="left:13px;top:354px" width="16" height="8" viewBox="0 0 16 8"><rect x="0.5" y="0.5" width="15" height="7" fill="#fff" stroke="#000"/><rect x="2" y="2" width="12" height="1" fill="#000"/><rect x="2" y="4" width="12" height="2" fill="#606060"/><rect x="1" y="6" width="14" height="1.5" fill="#000"/></svg>
<span class="t st" id="dc" style="left:32.60000000000002px;top:353px">c:</span>
<div class="abs" style="left:222px;top:350px;width:15px;height:20px;border:1px solid #b4b4b4;background:#e1e1e1"></div>
<svg class="abs" style="left:225px;top:356px" width="11" height="8" viewBox="0 0 11 8"><path d="M1 1.5L5.5 6L10 1.5" stroke="#606060" stroke-width="1.2" fill="none"/></svg>
</div>
</body>
</html>
